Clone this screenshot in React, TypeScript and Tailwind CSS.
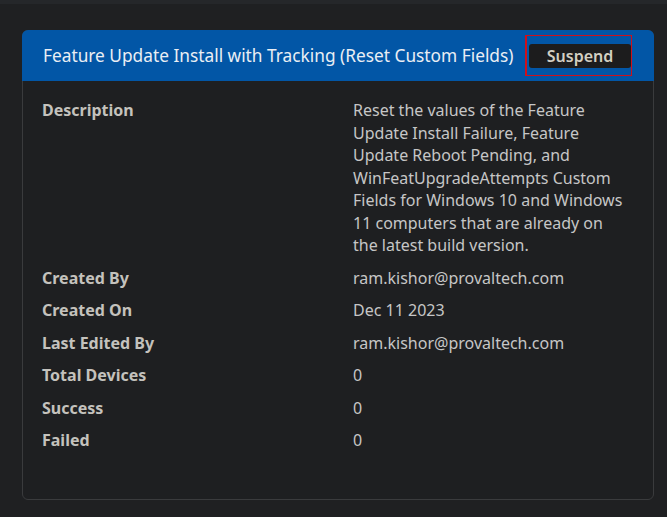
const rows: { label: string; value: string }[] = [
  {
    label: 'Description',
    value:
      'Reset the values of the Feature Update Install Failure, Feature Update Reboot Pending, and WinFeatUpgradeAttempts Custom Fields for Windows 10 and Windows 11 computers that are already on the latest build version.',
  },
  { label: 'Created By', value: 'ram.kishor@provaltech.com' },
  { label: 'Created On', value: 'Dec 11 2023' },
  { label: 'Last Edited By', value: 'ram.kishor@provaltech.com' },
  { label: 'Total Devices', value: '0' },
  { label: 'Success', value: '0' },
  { label: 'Failed', value: '0' },
];

export default function App() {
  return (
    <div
      className="min-h-[517px] w-[667px] bg-[#1f2022] text-[#c6c6c6]"
      style={{ fontFamily: '"Noto Sans", "Open Sans", sans-serif' }}
    >
      <div className="h-[4px] bg-[#25272a]" />
      <div className="px-[22px] pt-[26px] pr-[13px]">
        {/* Card */}
        <div className="rounded-[6px] border border-[#3a3b3d] bg-[#1e1f21]">
          {/* Header */}
          <div className="-m-px flex h-[51px] items-center justify-between rounded-t-[6px] bg-[#0256a6] pl-[21px] pr-[22px]">
            <h2 className="text-[17.3px] text-[#eaeef4]">
              Feature Update Install with Tracking (Reset Custom Fields)
            </h2>
            <div className="flex h-[41px] items-center border border-[#d0101a] border-l-2 pl-[2px]">
              <button className="h-[24px] w-[102px] rounded-[3px] bg-[#1c1c1d] text-[16px] font-semibold text-[#d3cfc2]">
                Suspend
              </button>
            </div>
          </div>

          {/* Body */}
          <div className="flex flex-col gap-[10px] px-[19px] pt-[19px] pb-[47px] text-[16px] leading-[22.5px]">
            {rows.map((row) => (
              <div key={row.label} className="flex">
                <div className="w-[311px] shrink-0 font-bold text-[#c4c2bd]">{row.label}</div>
                <div className="w-[276px]">{row.value}</div>
              </div>
            ))}
          </div>
        </div>
      </div>
    </div>
  );
}
